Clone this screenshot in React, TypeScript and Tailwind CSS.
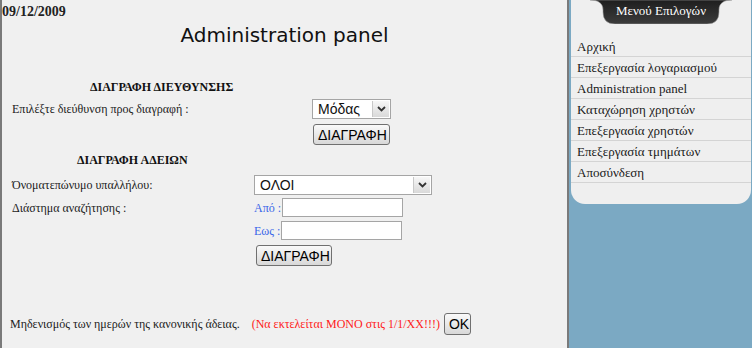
import React from "react";

const serif = { fontFamily: '"Liberation Serif", "Times New Roman", serif' };
const sans = { fontFamily: '"Liberation Sans", Arial, sans-serif' };

function Chevron() {
  return (
    <span className="flex h-full w-[17px] items-center justify-center border-l border-[#c8c8c8] bg-gradient-to-b from-[#f7f7f7] to-[#d9d9d9]">
      <svg width="9" height="6" viewBox="0 0 9 6">
        <path d="M1 1 L4.5 4.5 L8 1" fill="none" stroke="#333" strokeWidth="1.8" />
      </svg>
    </span>
  );
}

function FakeSelect({ value, width }: { value: string; width: string }) {
  return (
    <div className={`flex h-[20px] ${width} items-stretch border border-[#a5a5a5] bg-white p-[1px]`}>
      <span className="flex-1 pl-[4px] text-[14px] leading-[16px] text-[#111]" style={sans}>
        {value}
      </span>
      <Chevron />
    </div>
  );
}

function Button({ label, className = "" }: { label: string; className?: string }) {
  return (
    <button
      className={`h-[21px] rounded-[3px] border border-[#707070] bg-gradient-to-b from-[#fafafa] to-[#d8d8d8] px-[4px] text-[14px] leading-[16px] text-black ${className}`}
      style={sans}
    >
      {label}
    </button>
  );
}

const menu = [
  "Αρχική",
  "Επεξεργασία λογαριασμού",
  "Administration panel",
  "Καταχώρηση χρηστών",
  "Επεξεργασία χρηστών",
  "Επεξεργασία τμημάτων",
  "Αποσύνδεση",
];

export default function App() {
  return (
    <div className="flex h-[348px] w-[752px] overflow-hidden" style={serif}>
      <main className="flex h-full w-[569px] flex-col border-l-2 border-r-2 border-[#7a7a7a] bg-[#f0f0f0] text-[#222]">
        <div className="mt-[4px] text-[14px] font-bold leading-[16px] text-[#222]">09/12/2009</div>
        <h1
          className="mt-[3px] text-center text-[20px] leading-[24px] text-[#111]"
          style={{ fontFamily: '"DejaVu Sans", Verdana, sans-serif' }}
        >
          Administration panel
        </h1>

        <h2 className="ml-[88px] mt-[33px] text-[12px] font-bold leading-[14px] text-[#111]">
          ΔΙΑΓΡΑΦΗ ΔΙΕΥΘΥΝΣΗΣ
        </h2>
        <div className="mt-[5px] flex items-center">
          <span className="w-[310px] pl-[10px] text-[12px] leading-[14px]">
            Επιλέξτε διεύθυνση προς διαγραφή :
          </span>
          <FakeSelect value="Μόδας" width="w-[79px]" />
        </div>
        <Button label="ΔΙΑΓΡΑΦΗ" className="ml-[311px] mt-[5px] w-[77px]" />

        <h2 className="ml-[75px] mt-[8px] text-[12px] font-bold leading-[14px] text-[#111]">
          ΔΙΑΓΡΑΦΗ ΑΔΕΙΩΝ
        </h2>
        <div className="mt-[8px] flex items-center">
          <span className="w-[252px] pl-[10px] text-[12px] leading-[14px]">Όνοματεπώνυμο υπαλλήλου:</span>
          <FakeSelect value="ΟΛΟΙ" width="w-[178px]" />
        </div>
        <div className="mt-[3px] flex items-center">
          <span className="w-[252px] pl-[10px] text-[12px] leading-[14px]">Διάστημα αναζήτησης :</span>
          <span className="text-[12px] leading-[14px] text-[#3a66e8]">Από :</span>
          <input className="ml-[1px] h-[19px] w-[121px] border border-[#a5a5a5] bg-white" />
        </div>
        <div className="mt-[4px] flex items-center">
          <span className="w-[252px]" />
          <span className="text-[12px] leading-[14px] text-[#3a66e8]">Εως :</span>
          <input className="ml-[1px] h-[19px] w-[121px] border border-[#a5a5a5] bg-white" />
        </div>
        <Button label="ΔΙΑΓΡΑΦΗ" className="ml-[254px] mt-[5px] w-[76px]" />

        <div className="mt-[47px] flex items-center">
          <span className="pl-[8px] text-[12px] leading-[14px]">Μηδενισμός των ημερών της κανονικής άδειας.</span>
          <span className="ml-[12px] text-[12px] leading-[14px] text-[#ff1a1a]">
            (Να εκτελείται ΜΟΝΟ στις 1/1/ΧΧ!!!)
          </span>
          <Button label="OK" className="ml-[4px] h-[22px] w-[27px] px-0" />
        </div>
      </main>

      <aside className="h-full w-[183px] bg-[#7ba9c3] pl-[2px] pr-[1px]">
        <div className="h-[204px] rounded-b-[14px] bg-[#efefef]">
          <div className="relative mx-auto flex h-[24px] w-[142px] items-start justify-center">
            <svg className="absolute inset-0" width="142" height="24" viewBox="0 0 142 24">
              <defs>
                <linearGradient id="tab" x1="0" y1="0" x2="0" y2="1">
                  <stop offset="0" stopColor="#1e1e1e" />
                  <stop offset="1" stopColor="#3c3c3c" />
                </linearGradient>
              </defs>
              <path
                d="M0 0 H142 C134 0 129 3 129 10 V12 Q129 24 117 24 H25 Q13 24 13 12 V10 C13 3 8 0 0 0 Z"
                fill="url(#tab)"
                stroke="#9a9a9a"
                strokeWidth="0.6"
              />
            </svg>
            <span className="relative mt-[3px] text-[13px] leading-[15px] text-white">Μενού Επιλογών</span>
          </div>
          <ul className="mt-[12px]">
            {menu.map((item) => (
              <li
                key={item}
                className="h-[21px] border-b border-[#d4d4d4] pl-[6px] pt-[3px] text-[13px] leading-[15px] text-[#1a1a1a]"
              >
                {item}
              </li>
            ))}
          </ul>
        </div>
      </aside>
    </div>
  );
}
